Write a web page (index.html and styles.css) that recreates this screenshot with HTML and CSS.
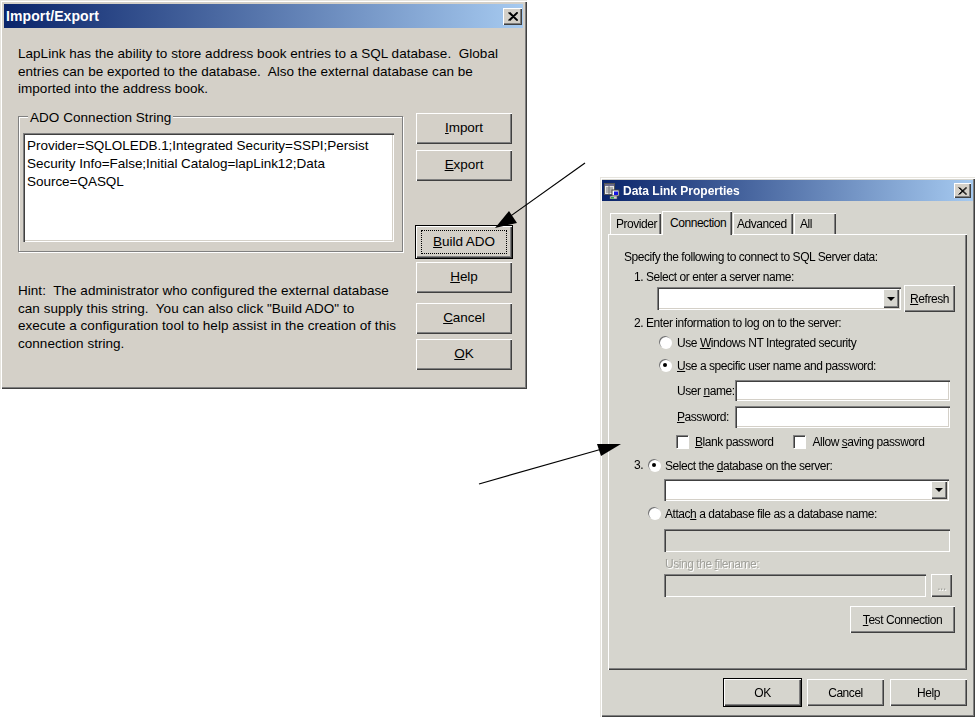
FILE: index.html
```html
<!DOCTYPE html>
<html lang="en">
<head>
<meta charset="utf-8">
<title>Import/Export and Data Link Properties</title>
<link rel="stylesheet" href="styles.css">
</head>
<body>
<div class="canvas">
  <section class="win win-import">
    <header class="title">
      <span class="title-text big">Import/Export</span>
      <span class="close big-close"><svg viewBox="0 0 10 9" width="10" height="9"><path d="M0.5 0.5L9 8.5M1.8 0.5L10 8.5M9 0.5L0.5 8.5M10 0.5L1.8 8.5" stroke="#000" stroke-width="1.1" fill="none"/></svg></span>
    </header>
    <div class="import-body">
      <p class="copy intro">LapLink has the ability to store address book entries to a SQL database.&nbsp; Global<br>entries can be exported to the database.&nbsp; Also the external database can be<br>imported into the address book.</p>
      <div class="import-main">
        <div class="import-left">
          <div class="group">
            <span class="legend">ADO Connection String</span>
            <div class="well conn">Provider=SQLOLEDB.1;Integrated Security=SSPI;Persist<br>Security Info=False;Initial Catalog=lapLink12;Data<br>Source=QASQL</div>
          </div>
          <p class="copy hint">Hint:&nbsp; The administrator who configured the external database<br>can supply this string.&nbsp; You can also click "Build ADO" to<br>execute a configuration tool to help assist in the creation of this<br>connection string.</p>
        </div>
        <div class="import-buttons">
          <div class="btn b-large"><span><u>I</u>mport</span></div>
          <div class="btn b-large g6"><span><u>E</u>xport</span></div>
          <div class="btn b-large b-default g45"><span class="focus"><span><u>B</u>uild ADO</span></span></div>
          <div class="btn b-large g4"><span><u>H</u>elp</span></div>
          <div class="btn b-large g10"><span><u>C</u>ancel</span></div>
          <div class="btn b-large g5"><span><u>O</u>K</span></div>
        </div>
      </div>
    </div>
  </section>

  <section class="win win-link">
    <header class="title title-small">
      <svg class="app-icon" viewBox="0 0 16 16" width="16" height="16">
        <rect x="0.5" y="0.5" width="10" height="11" fill="#e8e8e8" stroke="#555"/>
        <rect x="1" y="1" width="9" height="2" fill="#6a6a8a"/>
        <path d="M2 5H9M2 7H9M2 9H9M5 3V11" stroke="#777"/>
        <rect x="8" y="7" width="7" height="6" fill="#fff" stroke="#444"/>
        <rect x="10" y="8.5" width="4" height="3.5" fill="#1414e0"/>
        <rect x="6" y="13" width="7" height="3" fill="#cfcfcf" stroke="#555" stroke-width="0.6"/>
        <rect x="7" y="14" width="3" height="1.5" fill="#2fa84f"/>
      </svg>
      <span class="title-text small">Data Link Properties</span>
      <span class="close small-close"><svg viewBox="0 0 9 8" width="9" height="8"><path d="M0.5 0.5L8 7.5M1.6 0.5L9 7.5M8 0.5L0.5 7.5M9 0.5L1.6 7.5" stroke="#000" stroke-width="1" fill="none"/></svg></span>
    </header>
    <nav class="tabs">
      <span class="tab t-provider">Provider</span>
      <span class="tab tab-on t-connection">Connection</span>
      <span class="tab t-advanced">Advanced</span>
      <span class="tab t-all">All</span>
    </nav>
    <div class="pane">
      <div class="line tx">Specify the following to connect to SQL Server data:</div>
      <div class="line tx i1 m4">1. Select or enter a server name:</div>
      <div class="rowflex i2 m1 server-row">
        <div class="well combo server-combo"><span class="drop"><i></i></span></div>
        <div class="btn refresh"><span><u>R</u>efresh</span></div>
      </div>
      <div class="line tx i1 m2">2. Enter information to log on to the server:</div>
      <label class="line check i-radio m4"><span class="radio"></span><span class="lab">Use <u>W</u>indows NT Integrated security</span></label>
      <label class="line check i-radio m7"><span class="radio on"></span><span class="lab"><u>U</u>se a specific user name and password:</span></label>
      <div class="rowflex i3 m7"><span class="field-label">User <u>n</u>ame:</span><div class="well field h21"></div></div>
      <div class="rowflex i3 m5"><span class="field-label"><u>P</u>assword:</span><div class="well field h22"></div></div>
      <div class="line rowflex i3 m5">
        <label class="check"><span class="box"></span><span class="lab"><u>B</u>lank password</span></label>
        <label class="check allow"><span class="box"></span><span class="lab">Allow <u>s</u>aving password</span></label>
      </div>
      <div class="line check i1 m8"><span class="num">3.</span><span class="radio on"></span><span class="lab lab-tight">Select the <u>d</u>atabase on the server:</span></div>
      <div class="well combo db-combo i4 m6"><span class="drop"><i></i></span></div>
      <div class="line check i5 m4"><span class="radio"></span><span class="lab lab-tight">Attac<u>h</u> a database file as a database name:</span></div>
      <div class="well disabled attach i4 m8"></div>
      <div class="line tx muted i4 m3">Using the <u>f</u>ilename:</div>
      <div class="rowflex i4 m3">
        <div class="well disabled filename"></div>
        <div class="btn browse muted"><span>...</span></div>
      </div>
      <div class="test-row"><div class="btn test"><span><u>T</u>est Connection</span></div></div>
    </div>
    <footer class="foot">
      <div class="btn foot-btn b-default"><span>OK</span></div>
      <div class="btn foot-btn"><span>Cancel</span></div>
      <div class="btn foot-btn"><span>Help</span></div>
    </footer>
  </section>

  <svg class="arrows" viewBox="0 0 979 717" width="979" height="717">
    <path d="M585 163L505 220" stroke="#000" stroke-width="1.2" fill="none"/>
    <path d="M495 228L509 211L517 223Z" fill="#000"/>
    <path d="M479 484L602 449" stroke="#000" stroke-width="1.2" fill="none"/>
    <path d="M621 444L597 444L601 456Z" fill="#000"/>
  </svg>
</div>
</body>
</html>
```
FILE: styles.css
```css
* { box-sizing: border-box; }
html, body { margin: 0; padding: 0; background: #fff; }
body { font-family: "Liberation Sans", Arial, sans-serif; color: #000; overflow: hidden; }
.canvas { position: relative; width: 979px; height: 717px; overflow: hidden; filter: blur(0.4px); }
p { margin: 0; }
u { text-underline-offset: 1px; }

.win { position: absolute; box-shadow: inset 1px 1px 0 #e6e4de, inset 2px 2px 0 #fff, inset -1px -1px 0 #404040, inset -2px -2px 0 #808080; }
.win-import { left: 0; top: 0; width: 527px; height: 389px; padding: 4px; background: #d4d0c8; letter-spacing: -0.05px; }
.win-link { left: 600px; top: 177px; width: 375px; height: 540px; padding: 3px 2px; background: #d6d5ce; letter-spacing: -0.45px; }

.title { display: flex; align-items: center; height: 24px; background: linear-gradient(90deg, #0a246a, #a6caf0); color: #fff; font-weight: 700; }
.title-small { height: 21px; }
.title-text.big { font-size: 14px; padding-left: 2px; letter-spacing: 0.1px; }
.title-text.small { font-size: 12px; padding-left: 3px; letter-spacing: 0; }
.app-icon { margin-left: 2px; }
.close { margin-left: auto; display: flex; align-items: center; justify-content: center; background: #d4d0c8; box-shadow: inset 1px 1px 0 #fff, inset -1px -1px 0 #404040, inset -2px -2px 0 #808080; }
.big-close { width: 19px; height: 17px; margin-right: 1px; }
.small-close { width: 17px; height: 15px; margin-right: 2px; }

.import-body { padding: 17px 11px 0 14px; }
.copy { font-size: 13.5px; line-height: 17.7px; letter-spacing: 0.03px; }
.intro { height: 53px; }
.import-main { display: flex; margin-top: 15px; }
.import-left { width: 385px; padding-top: 3px; }
.group { position: relative; height: 136px; padding: 16px 8px 9px 4px; border: 1px solid #808080; box-shadow: 1px 1px 0 #fff, inset 1px 1px 0 #fff; }
.legend { position: absolute; left: 9px; top: -8px; padding: 0 2px; background: #d4d0c8; font-size: 13.5px; line-height: 18px; letter-spacing: 0.05px; }
.well { background: #fff; box-shadow: inset 1px 1px 0 #808080, inset 2px 2px 0 #404040, inset -1px -1px 0 #fff, inset -2px -2px 0 #d4d0c8; }
.conn { width: 371px; height: 109px; padding: 4px 4px 0; font-size: 13.5px; line-height: 18px; letter-spacing: -0.03px; }
.hint { margin-top: 30px; }
.import-buttons { margin-left: 13px; width: 96px; display: flex; flex-direction: column; }

.btn { display: flex; align-items: center; justify-content: center; background: inherit; box-shadow: inset 1px 1px 0 #fff, inset -1px -1px 0 #404040, inset -2px -2px 0 #808080; }
.b-large { height: 31px; font-size: 13.5px; flex: none; padding-bottom: 2px; }
.g6 { margin-top: 6px; }
.g45 { margin-top: 45px; height: 32px; padding-bottom: 1px; }
.g4 { margin-top: 4px; }
.g10 { margin-top: 10px; }
.g5 { margin-top: 5px; }
.b-default { box-shadow: 0 0 0 1px #000, inset 1px 1px 0 #fff, inset -1px -1px 0 #404040, inset -2px -2px 0 #808080; }
.focus { display: flex; align-items: center; justify-content: center; width: 84px; height: 22px; outline: 1px dotted #000; }

.tabs { display: flex; align-items: flex-end; height: 24px; margin: 9px 0 0 8px; font-size: 12px; }
.tab { display: flex; align-items: center; padding-left: 6px; height: 21px; margin-right: 1px; box-shadow: inset 1px 1px 0 #fff, inset -1px 0 0 #404040, inset -2px 0 0 #808080; }
.tab-on { height: 24px; margin-bottom: -1px; position: relative; z-index: 1; background: #d6d5ce; }
.t-provider { width: 51px; }
.t-connection { width: 70px; padding-left: 8px; }
.t-advanced { width: 60px; padding-left: 4px; }
.t-all { width: 42px; }

.pane { width: 359px; height: 436px; margin-left: 6px; padding: 14px 0 0 15px; font-size: 12px; box-shadow: inset 1px 1px 0 #fff, inset -1px -1px 0 #404040, inset -2px -2px 0 #808080; }
.line { height: 16px; line-height: 16px; white-space: nowrap; }
.tx { padding: 1px 0 0 1px; }
.lab { padding: 1px 0 0 1px; }
.rowflex { display: flex; align-items: center; }
.check { display: flex; align-items: center; }
.i1 { margin-left: 10px; }
.i2 { margin-left: 34px; }
.i3 { margin-left: 53px; }
.i4 { margin-left: 41px; }
.i5 { margin-left: 25px; }
.i-radio { margin-left: 36px; }
.i-radio .radio { margin-right: 5px; }
.m1 { margin-top: 1px; }
.m2 { margin-top: 2px; }
.m3 { margin-top: 3px; }
.m4 { margin-top: 4px; }
.m5 { margin-top: 5px; }
.m6 { margin-top: 6px; }
.m7 { margin-top: 7px; }
.m8 { margin-top: 8px; }

.radio { flex: none; position: relative; width: 12px; height: 12px; margin-right: 6px; border-radius: 50%; background: #fff; box-shadow: inset 1px 1px 0 #707070, 1px 1px 0 #fff; }
.radio.on::after { content: ""; position: absolute; left: 4px; top: 4px; width: 4px; height: 4px; border-radius: 50%; background: #000; }
.box { flex: none; width: 12px; height: 13px; margin-right: 6px; background: #fff; box-shadow: inset 1px 1px 0 #808080, inset 2px 2px 0 #404040, 1px 1px 0 #fff; }
.num { width: 15px; padding-left: 1px; }
.lab-tight { margin-left: -2px; }
.allow { margin-left: 20px; }

.server-row { height: 27px; }
.combo { display: flex; justify-content: flex-end; padding: 2px; }
.server-combo { width: 244px; height: 23px; }
.refresh { width: 51px; height: 27px; margin-left: 3px; }
.db-combo { width: 285px; height: 22px; }
.drop { width: 16px; display: flex; align-items: center; justify-content: center; background: #d6d5ce; box-shadow: inset 1px 1px 0 #fff, inset -1px -1px 0 #404040, inset -2px -2px 0 #808080; }
.drop i { display: block; width: 0; height: 0; border: 4px solid transparent; border-top: 4px solid #000; border-bottom: 0; }
.field-label { width: 59px; white-space: nowrap; padding-left: 1px; }
.field { width: 215px; }
.h21 { height: 21px; }
.h22 { height: 22px; }
.disabled { background: #d6d5ce; box-shadow: inset 1px 1px 0 #808080, inset 2px 2px 0 #404040, inset -1px -1px 0 #fff; }
.attach { width: 286px; height: 23px; }
.muted { color: #a0a09a; text-shadow: 1px 1px 0 #fff; }
.filename { width: 262px; height: 23px; }
.browse { width: 21px; height: 23px; margin-left: 5px; }
.test-row { display: flex; justify-content: flex-end; margin-top: 9px; padding-right: 12px; }
.test { width: 105px; height: 27px; }
.foot { display: flex; justify-content: flex-end; gap: 6px; margin-top: 9px; padding-right: 6px; font-size: 12px; }
.foot-btn { width: 77px; height: 27px; }
.arrows { position: absolute; left: 0; top: 0; pointer-events: none; }
```
